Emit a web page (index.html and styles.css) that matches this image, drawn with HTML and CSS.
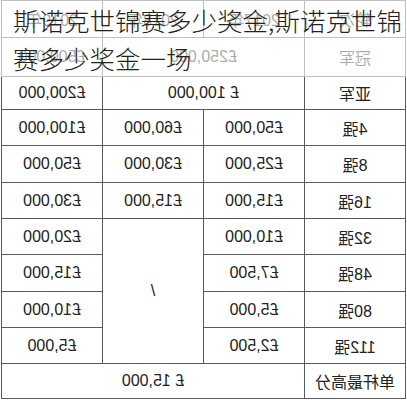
FILE: index.html
```html
<!DOCTYPE html>
<html lang="zh">
<head>
<meta charset="utf-8">
<title>斯诺克世锦赛多少奖金</title>
<link rel="stylesheet" href="styles.css">
</head>
<body>
<div class="frame">
  <div class="prize-table">
    <div class="cell head">轮次</div>
    <div class="cell head">2017年</div>
    <div class="cell head">2018年</div>
    <div class="cell head">2019年</div>

    <div class="cell">冠军</div>
    <div class="cell span2">£250,000</div>
    <div class="cell">£500,000</div>

    <div class="cell">亚军</div>
    <div class="cell span2">£ 100,000</div>
    <div class="cell">£200,000</div>

    <div class="cell">4强</div>
    <div class="cell">£50,000</div>
    <div class="cell">£60,000</div>
    <div class="cell">£100,000</div>

    <div class="cell">8强</div>
    <div class="cell">£25,000</div>
    <div class="cell">£30,000</div>
    <div class="cell">£50,000</div>

    <div class="cell">16强</div>
    <div class="cell">£15,000</div>
    <div class="cell">£15,000</div>
    <div class="cell">£30,000</div>

    <div class="cell">32强</div>
    <div class="cell">£10,000</div>
    <div class="cell rows4">/</div>
    <div class="cell">£20,000</div>

    <div class="cell">48强</div>
    <div class="cell">£7,500</div>
    <div class="cell">£15,000</div>

    <div class="cell">80强</div>
    <div class="cell">£5,000</div>
    <div class="cell">£10,000</div>

    <div class="cell">112强</div>
    <div class="cell">£2,500</div>
    <div class="cell">£5,000</div>

    <div class="cell">单杆最高分</div>
    <div class="cell span3">£ 15,000</div>
  </div>
  <h1 class="title">
    <span class="title-line">斯诺克世锦赛多少奖金,斯诺克世锦</span>
    <span class="title-line">赛多少奖金一场</span>
  </h1>
</div>
</body>
</html>
```
FILE: styles.css
```css
html, body {
  margin: 0;
  padding: 0;
  background: #ffffff;
}

.frame {
  position: relative;
  width: 407px;
  height: 400px;
  overflow: hidden;
  background: #ffffff;
}

.prize-table {
  margin-left: 1px;
  width: 405px;
  display: grid;
  grid-template-columns: 100px 100px 100px 100px;
  grid-template-rows: 36px 38px 32px 35px 36px 35px 35px 36px 35px 35px 34px;
  gap: 1px;
  padding: 1px;
  box-sizing: border-box;
  background: #5a5a5a;
  transform: scaleX(-1);
  font-family: "Liberation Sans", "Noto Sans CJK SC", sans-serif;
  font-size: 16px;
  color: #222222;
}

.cell {
  background: #ffffff;
  display: flex;
  align-items: center;
  justify-content: center;
  white-space: nowrap;
}

.span2 {
  grid-column: span 2;
}

.span3 {
  grid-column: span 3;
}

.rows4 {
  grid-row: span 4;
}

.title {
  position: absolute;
  top: 0;
  left: 0;
  width: 407px;
  height: 77px;
  margin: 0;
  padding: 1px 0 0 13px;
  box-sizing: border-box;
  background: rgba(255, 255, 255, 0.62);
  font-family: "Noto Sans CJK SC", sans-serif;
  font-weight: 300;
  font-size: 25.5px;
  line-height: 38px;
  color: #222222;
}

.title-line {
  display: block;
  white-space: nowrap;
}
```
